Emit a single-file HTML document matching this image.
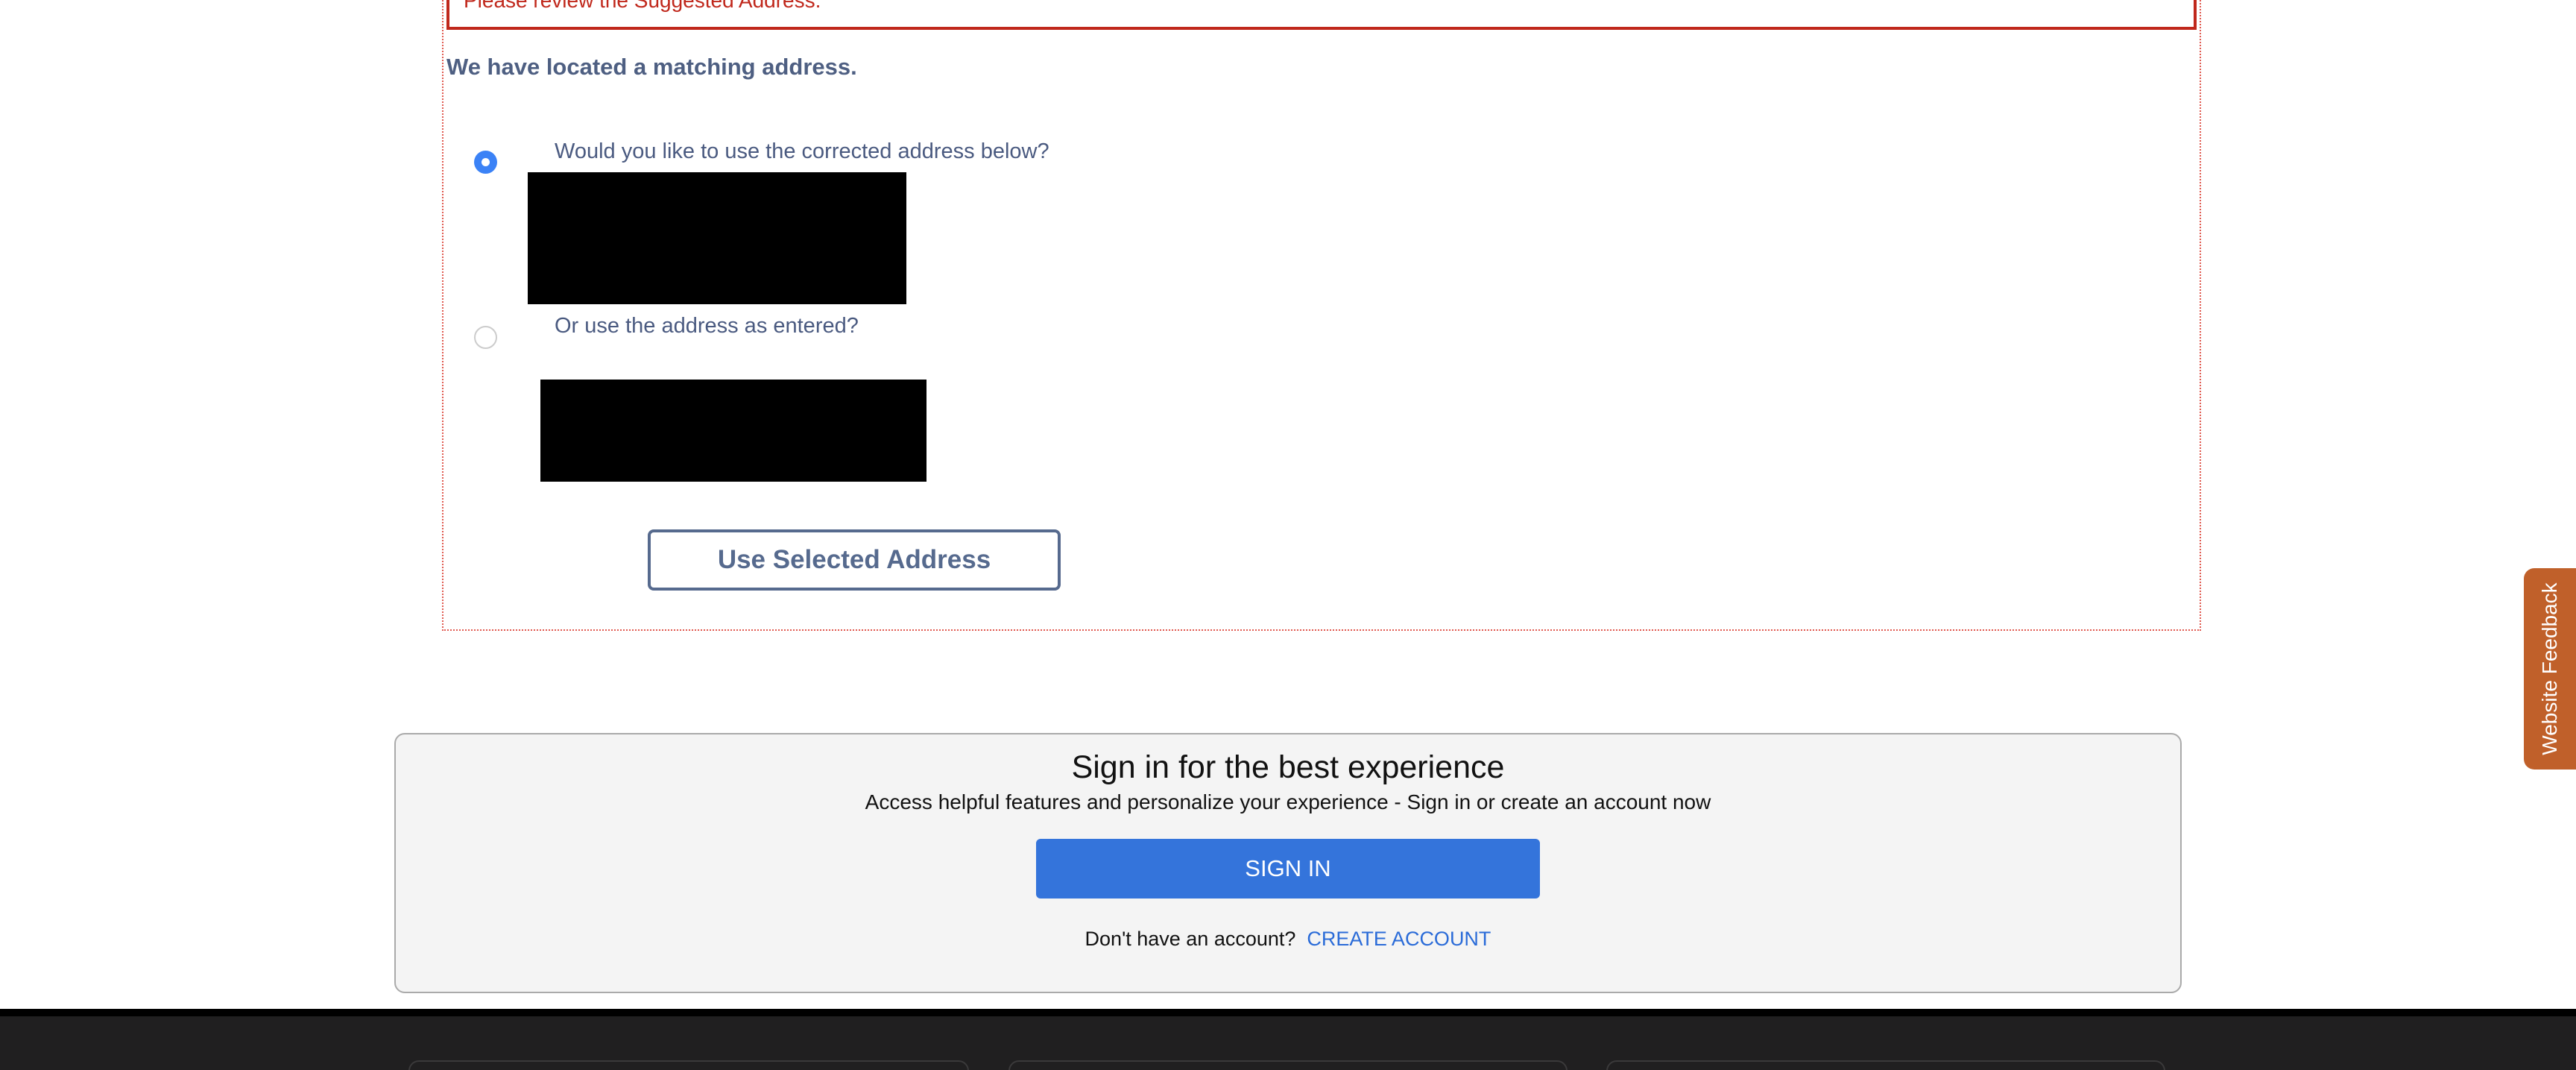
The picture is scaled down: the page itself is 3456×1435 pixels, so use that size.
<!DOCTYPE html>
<html style="overflow:hidden"><head><meta charset="utf-8"><style>
*{margin:0;padding:0;box-sizing:border-box}
body{width:3456px;height:1435px;background:#fff;position:relative;overflow:hidden;font-family:"Liberation Sans",sans-serif}
.a{position:absolute;white-space:nowrap}
</style></head><body>
<div class="a" style="left:593px;top:-20px;width:2360px;height:866px;border:2px dotted #e05a50;border-top:none"></div>
<div class="a" style="left:599px;top:-20px;width:2348px;height:60px;border:4px solid #c0281c;border-top:none"></div>
<div class="a" style="left:622px;top:-16px;font-size:28px;color:#c0281c;line-height:34px">Please review the Suggested Address.</div>
<div class="a" style="left:599px;top:70px;font-size:31px;font-weight:bold;color:#4e5f82;line-height:40px">We have located a matching address.</div>
<div class="a" style="left:636px;top:202px;width:31px;height:31px;border-radius:50%;background:#3b82f6"></div>
<div class="a" style="left:646px;top:212px;width:11px;height:11px;border-radius:50%;background:#fff"></div>
<div class="a" style="left:744px;top:186px;font-size:29px;color:#4a5a80;line-height:34px">Would you like to use the corrected address below?</div>
<div class="a" style="left:708px;top:231px;width:508px;height:177px;background:#000"></div>
<div class="a" style="left:636px;top:437px;width:31px;height:31px;border-radius:50%;border:2px solid #ccc;background:#fff"></div>
<div class="a" style="left:744px;top:420px;font-size:29px;color:#4a5a80;line-height:34px">Or use the address as entered?</div>
<div class="a" style="left:725px;top:509px;width:518px;height:137px;background:#000"></div>
<div class="a" style="left:869px;top:710px;width:554px;height:82px;border:4px solid #566a8e;border-radius:8px;font-size:35px;font-weight:bold;color:#566a8e;text-align:center;line-height:74px">Use Selected Address</div>

<div class="a" style="left:529px;top:983px;width:2398px;height:349px;border:2px solid #aaa;border-radius:14px;background:#f4f4f4"></div>
<div class="a" style="left:529px;width:2398px;top:1002px;text-align:center;font-size:43px;color:#111;line-height:54px">Sign in for the best experience</div>
<div class="a" style="left:529px;width:2398px;top:1059px;text-align:center;font-size:28px;color:#111;line-height:34px">Access helpful features and personalize your experience - Sign in or create an account now</div>
<div class="a" style="left:1390px;top:1125px;width:676px;height:80px;background:#3474db;border-radius:6px;color:#fff;font-size:31px;text-align:center;line-height:80px">SIGN IN</div>
<div class="a" style="left:529px;width:2398px;top:1242px;text-align:center;font-size:27px;color:#111;line-height:34px">Don't have an account?&nbsp; <span style="color:#2a6bd8">CREATE ACCOUNT</span></div>

<div class="a" style="left:0;top:1353px;width:3456px;height:82px;background:#201f20;border-top:10px solid #000;overflow:hidden">
<div class="a" style="left:548px;top:59px;width:752px;height:40px;border:2px solid #3a393a;border-radius:14px"></div>
<div class="a" style="left:1353px;top:59px;width:750px;height:40px;border:2px solid #3a393a;border-radius:14px"></div>
<div class="a" style="left:2155px;top:59px;width:750px;height:40px;border:2px solid #3a393a;border-radius:14px"></div>
</div>

<div class="a" style="left:3386px;top:762px;width:80px;height:270px;background:#c0602a;border-radius:14px 0 0 14px"></div>
<div class="a" style="left:3286px;top:881px;width:270px;height:32px;transform:rotate(-90deg);color:#fff;font-size:28px;text-align:center;line-height:32px">Website Feedback</div>
</body></html>
